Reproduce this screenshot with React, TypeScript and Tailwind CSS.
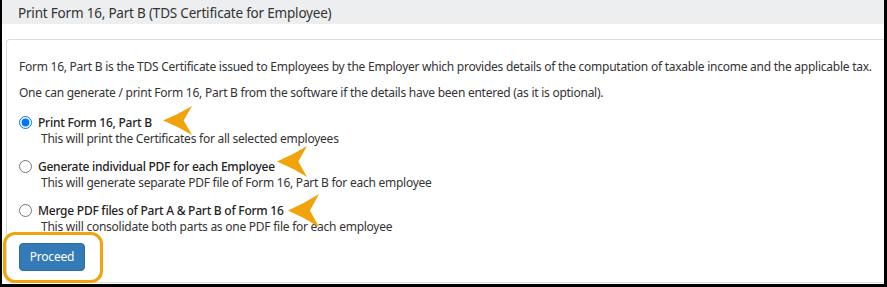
import React from 'react'

const font = { fontFamily: '"Noto Sans", "Open Sans", sans-serif' }

function Arrow({ className }: { className: string }) {
  return (
    <svg viewBox="0 0 32 34" preserveAspectRatio="none" className={className}>
      <path d="M0,17 Q16,10 31,0 L22,17 L31,34 Q16,24 0,17 Z" fill="#f0a30a" />
    </svg>
  )
}

interface OptionProps {
  label: string
  hint: string
  checked?: boolean
}

function Option({ label, hint, checked }: OptionProps) {
  return (
    <div className="flex flex-col">
      <label className="flex items-center text-[12px] tracking-[-0.25px] leading-[16px] font-medium text-[#222]">
        <input
          type="radio"
          name="printOption"
          defaultChecked={checked}
          className="m-0 mr-[6px] h-[13px] w-[13px] -translate-y-[1px]"
        />
        {label}
      </label>
      <div className="pl-[22px] text-[12px] tracking-[-0.25px] leading-[16px] text-[#333]">{hint}</div>
    </div>
  )
}

export default function App() {
  return (
    <div
      style={font}
      className="relative w-[887px] h-[287px] overflow-hidden bg-white border-l-2 border-r-[3px] border-b-[3px] border-black"
    >
      <div className="h-[24px] bg-[#eceef0] pl-[16px] text-[13.5px] tracking-[-0.2px] leading-[26px] text-[#333]">
        Print Form 16, Part B (TDS Certificate for Employee)
      </div>

      <div className="pl-[4px] pt-[15px]">
        <div className="flex flex-col items-start h-[244px] border border-r-0 border-[#dcdcdc] rounded-l-[4px] pl-[12px] pt-[18px] text-[#333]">
          <div className="flex flex-col gap-[8px] text-[12px] tracking-[-0.25px] leading-[18px]">
            <p>
              Form 16, Part B is the TDS Certificate issued to Employees by the Employer which provides details of the computation of taxable income and the applicable tax.
            </p>
            <p>
              One can generate / print Form 16, Part B from the software if the details have been entered (as it is optional).
            </p>
          </div>

          <div className="mt-[13px] flex flex-col gap-[12px]">
            <Option
              checked
              label="Print Form 16, Part B"
              hint="This will print the Certificates for all selected employees"
            />
            <Option
              label="Generate individual PDF for each Employee"
              hint="This will generate separate PDF file of Form 16, Part B for each employee"
            />
            <Option
              label="Merge PDF files of Part A & Part B of Form 16"
              hint="This will consolidate both parts as one PDF file for each employee"
            />
          </div>

          <button className="mt-[8px] h-[28px] w-[66px] rounded-[4px] border border-[#2e6da4] bg-[#337ab7] text-[12px] tracking-[-0.2px] text-white">
            Proceed
          </button>
        </div>
      </div>

      {/* annotations */}
      <Arrow className="absolute left-[161px] top-[106px] w-[30px] h-[29px]" />
      <Arrow className="absolute left-[275px] top-[146px] w-[31px] h-[31px]" />
      <Arrow className="absolute left-[286px] top-[194px] w-[32px] h-[33px]" />
      <div className="absolute left-[1px] top-[232px] w-[100px] h-[51px] rounded-[12px] border-[3px] border-[#f0a30a]" />
    </div>
  )
}
